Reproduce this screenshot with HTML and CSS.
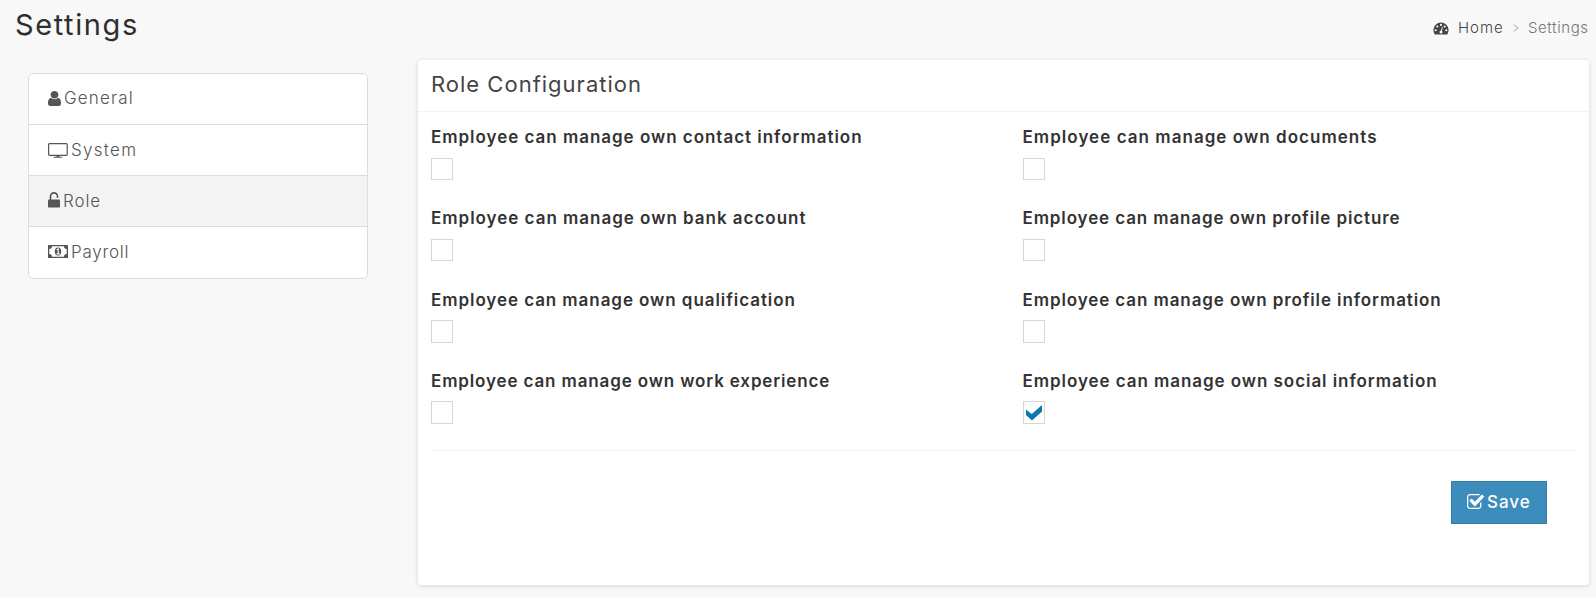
FILE: index.html
```html
<!DOCTYPE html>
<html lang="en">
<head>
<meta charset="utf-8">
<title>Settings</title>
<link rel="stylesheet" href="styles.css">
</head>
<body>
<header class="page-header">
  <h1 class="page-title">Settings</h1>
  <nav class="breadcrumb">
    <svg class="icon-dash" width="16" height="13" viewBox="0 0 16 13"><path fill="#444" d="M8 0.5A7.6 7.6 0 0 0 .4 8.100Q.4 10.500 1.600 12.200Q1.800 12.500 2.200 12.500H13.800Q14.200 12.500 14.400 12.200Q15.600 10.500 15.600 8.100A7.600 7.600 0 0 0 8 .5Z"/><g fill="#f8f8f8"><circle cx="2.700" cy="8.200" r="1.050"/><circle cx="4.300" cy="4.500" r="1.050"/><circle cx="8" cy="2.900" r="1.050"/><circle cx="11.700" cy="4.500" r="1.050"/><circle cx="13.300" cy="8.200" r="1.050"/></g><path d="M9.400 5.200 8.200 9.500" stroke="#f8f8f8" stroke-width="1"/><circle cx="8" cy="9.900" r="1.500" fill="#f8f8f8"/></svg>
    <a class="crumb-home">Home</a>
    <svg class="crumb-sep" width="6" height="8" viewBox="0 0 6 8"><path d="M.6.600 5 4 .6 7.400" fill="none" stroke="#bbb" stroke-width="1.200"/></svg>
    <span class="crumb-current">Settings</span>
  </nav>
</header>
<main class="content">
  <ul class="menu">
    <li class="menu-item"><svg width="13" height="15" viewBox="256 128 1280 1536" preserveAspectRatio="none"><path fill="#555" d="M1536 1399q0 109-62.500 187t-150.500 78h-854q-88 0-150.500-78t-62.500-187q0-85 8.500-160.500t31.500-152 58.500-131 94-89 134.500-34.500q131 128 313 128t313-128q76 0 134.500 34.500t94 89 58.500 131 31.500 152 8.500 160.500zm-256-887q0 159-112.500 271.500t-271.500 112.500-271.500-112.500-112.500-271.500 112.500-271.500 271.500-112.500 271.500 112.500 112.500 271.500z"/></svg><span class="t-general">General</span></li>
    <li class="menu-item item-system"><svg width="20" height="15" viewBox="0 0 20 15"><rect x=".6" y=".6" width="18.600" height="11.800" rx="1" fill="none" stroke="#555" stroke-width="1.200"/><path d="M8.500 12.400h2.800v1.400h2.900v1H5.600v-1h2.900z" fill="#555"/></svg><span class="t-system">System</span></li>
    <li class="menu-item item-role active"><svg width="12" height="16" viewBox="0 0 12 16"><path d="M2.500 8V4.400a3.500 3.500 0 0 1 7 0V5.200" fill="none" stroke="#555" stroke-width="1.600" stroke-linecap="round"/><rect y="7.500" width="12" height="8" rx=".8" fill="#555"/></svg><span class="t-role">Role</span></li>
    <li class="menu-item item-payroll"><svg width="20" height="13" viewBox="0 0 20 13"><path fill="#555" fill-rule="evenodd" d="M.6 0h18.800q.6 0 .6.600v11.800q0 .6-.6.600H.6Q0 13 0 12.400V.600Q0 0 .6 0ZM4 1.300A2.700 2.700 0 0 1 1.300 4v5A2.700 2.700 0 0 1 4 11.700h12A2.700 2.700 0 0 1 18.700 9V4A2.700 2.700 0 0 1 16 1.300Z"/><ellipse cx="10" cy="6.500" rx="3.200" ry="4" fill="#555"/><path d="M8.700 4.900 10.200 3.900V8.600M8.600 8.900h3" fill="none" stroke="#fff" stroke-width="1.100"/></svg><span class="t-payroll">Payroll</span></li>
  </ul>
  <section class="panel">
    <h2 class="panel-title">Role Configuration</h2>
    <div class="panel-body">
      <div class="options">
        <div class="option contact"><span class="label">Employee can manage own contact information</span><span class="box"></span></div>
        <div class="option documents"><span class="label">Employee can manage own documents</span><span class="box"></span></div>
        <div class="option bank"><span class="label">Employee can manage own bank account</span><span class="box"></span></div>
        <div class="option picture"><span class="label">Employee can manage own profile picture</span><span class="box"></span></div>
        <div class="option qualification"><span class="label">Employee can manage own qualification</span><span class="box"></span></div>
        <div class="option profile"><span class="label">Employee can manage own profile information</span><span class="box"></span></div>
        <div class="option work"><span class="label">Employee can manage own work experience</span><span class="box"></span></div>
        <div class="option social"><span class="label">Employee can manage own social information</span><span class="box"><svg width="16" height="16" viewBox="0 0 16 16"><path fill="#0d78ae" d="M0 4.500 5.800 9 16 0V6.500L6 15.500 0 10Z"/></svg></span></div>
      </div>
      <div class="actions">
        <button class="save"><svg width="17" height="15" viewBox="64 128 1664 1408" preserveAspectRatio="none"><path fill="#fff" d="M1472 930v318q0 119-84.500 203.500t-203.500 84.500h-832q-119 0-203.500-84.500t-84.500-203.500v-832q0-119 84.500-203.500t203.500-84.500h832q63 0 117 25 15 7 18 23 3 17-9 29l-49 49q-10 10-23 10-3 0-9-2-23-6-45-6h-832q-66 0-113 47t-47 113v832q0 66 47 113t113 47h832q66 0 113-47t47-113v-254q0-13 9-22l64-64q10-10 23-10 6 0 12 3 20 8 20 29zm231-489l-814 814q-24 24-57 24t-57-24l-430-430q-24-24-24-57t24-57l110-110q24-24 57-24t57 24l263 263 647-647q24-24 57-24t57 24l110 110q24 24 24 57t-24 57z"/></svg><span>Save</span></button>
      </div>
    </div>
  </section>
</main>
</body>
</html>
```
FILE: styles.css
```css
* { box-sizing: border-box; }
body {
  margin: 0;
  height: 598px;
  overflow: hidden;
  background: #f8f8f8;
  font-family: Inter, "Open Sans", sans-serif;
  color: #333;
}
svg { display: block; flex: none; }
.page-header {
  display: flex;
  justify-content: space-between;
  height: 60px;
  padding: 0 7px 0 15px;
}
.page-title {
  margin: 0;
  padding-top: 7px;
  font-size: 29px;
  line-height: 36px;
  font-weight: 400;
  letter-spacing: 1.6px;
  color: #2f2f2f;
}
.breadcrumb {
  display: flex;
  align-items: center;
  height: 20px;
  margin-top: 18px;
  font-size: 15px;
  line-height: 20px;
}
.crumb-home { width: 46px; margin-left: 9px; color: #444; font-weight: 350; letter-spacing: 1px; }
.crumb-sep { margin: 0 9px; }
.crumb-current { width: 61px; color: #777; font-weight: 350; letter-spacing: .6px; }
.content { display: flex; align-items: flex-start; }
.menu {
  list-style: none;
  width: 340px;
  height: 206px;
  margin: 13px 50px 0 28px;
  padding: 0;
  background: #fff;
  border: 1px solid #ddd;
  border-radius: 5px;
  overflow: hidden;
}
.menu-item {
  display: flex;
  align-items: center;
  height: 51px;
  padding: 0 18px 2px 19px;
  gap: 3px;
  border-bottom: 1px solid #ddd;
  font-size: 17px;
  font-weight: 350;
  color: #555;
}
.menu-item:last-child { border-bottom: 0; }
.menu-item.active { background: #f4f4f4; }
.item-system, .item-role { padding-bottom: 0; }
.item-role svg { margin-top: -2px; }
.t-general { letter-spacing: 1.15px; }
.t-system { letter-spacing: 1.3px; }
.t-role { letter-spacing: .9px; }
.t-payroll { letter-spacing: .75px; }
.panel {
  width: 1171px;
  height: 525px;
  background: #fff;
  border-radius: 4px;
  box-shadow: 0 1px 5px rgba(0, 0, 0, .14);
}
.panel-title {
  height: 52px;
  margin: 0;
  padding: 9px 13px 0;
  border-bottom: 1px solid #f3f3f3;
  font-size: 22px;
  line-height: 30px;
  font-weight: 400;
  letter-spacing: 1px;
  color: #444;
}
.panel-body { padding: 0 13px; }
.options {
  display: grid;
  grid-template-columns: 591.500px 1fr;
  grid-auto-rows: 81.3px;
  height: 339px;
  padding-top: 13px;
  border-bottom: 1px solid #f3f3f3;
}
.label { display: block; height: 32.600px; font-size: 17px; line-height: 24px; font-weight: 600; white-space: nowrap; }
.contact .label { letter-spacing: .97px; }
.documents .label { letter-spacing: 1.04px; }
.bank .label { letter-spacing: .98px; }
.picture .label { letter-spacing: .88px; }
.qualification .label { letter-spacing: .93px; }
.profile .label { letter-spacing: .9px; }
.work .label { letter-spacing: .86px; }
.social .label { letter-spacing: .94px; }
.box {
  display: flex;
  align-items: center;
  justify-content: center;
  width: 22.400px;
  height: 22.400px;
  border: 1px solid #d6d6d6;
}
.actions { display: flex; justify-content: flex-end; padding: 30px 29px 0; }
.save {
  display: flex;
  align-items: center;
  gap: 3px;
  width: 96px;
  height: 43px;
  padding: 0 0 2px 15px;
  border: 1px solid #367fa9;
  background: #3c8dbc;
  color: #fff;
  font: 500 17px Inter, "Open Sans", sans-serif;
  letter-spacing: 1px;
}
.save span { padding-top: 1px; }
```
